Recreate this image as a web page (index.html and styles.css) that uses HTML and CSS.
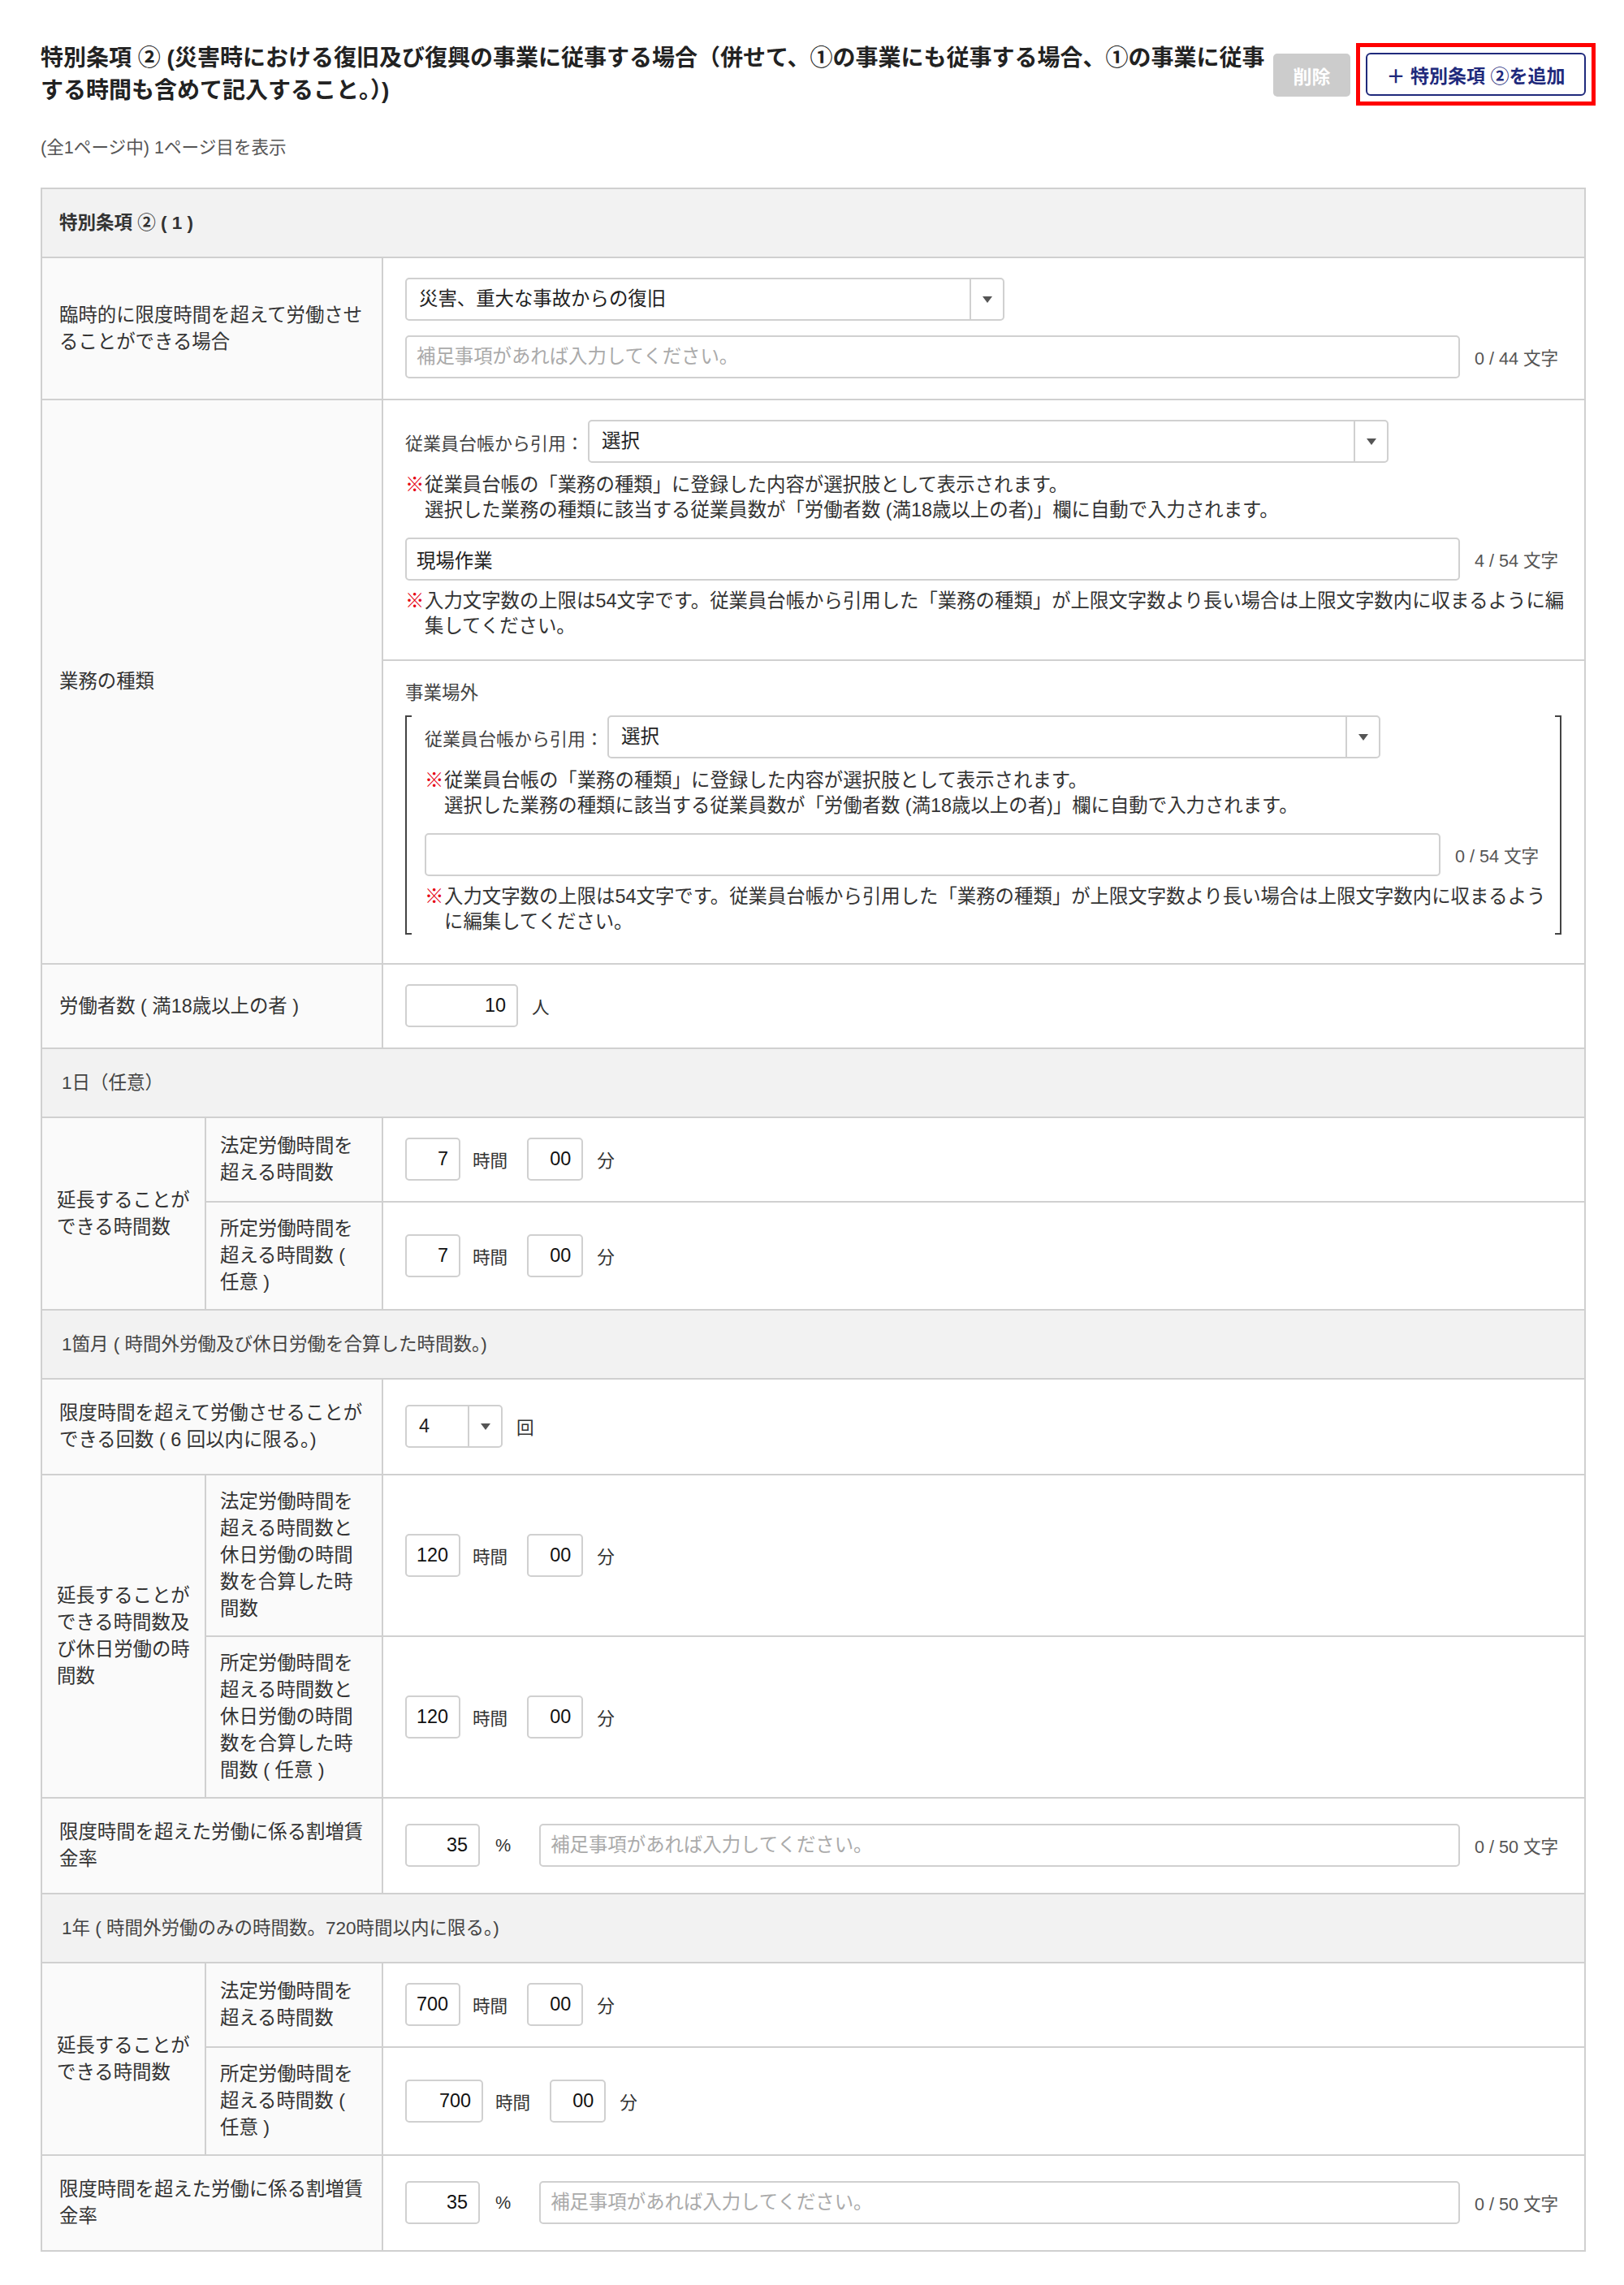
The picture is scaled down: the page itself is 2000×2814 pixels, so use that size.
FILE: index.html
```html
<!doctype html>
<html lang="ja">
  <head>
    <meta charset="UTF-8" />
    <meta name="viewport" content="width=device-width, initial-scale=1.0"/>
    <title>特別条項 ②</title>
    <link rel="stylesheet" href="styles.css">
  </head>
  <body>
    <div class="page">
      <div class="page-head">
        <h2 class="page-title">特別条項 ② (災害時における復旧及び復興の事業に従事する場合（併せて、①の事業にも従事する場合、①の事業に従事する時間も含めて記入すること。）)</h2>
        <button class="btn-delete" disabled>削除</button>
        <div class="highlight">
          <button class="btn-add">＋ 特別条項 ②を追加</button>
        </div>
      </div>

      <p class="page-info">(全1ページ中) 1ページ目を表示</p>

      <table class="form-table">
        <colgroup>
          <col class="col-group">
          <col class="col-sub">
          <col>
        </colgroup>

        <tr class="section-head first">
          <th colspan="3">特別条項 ② ( 1 )</th>
        </tr>

        <tr>
          <th class="label" colspan="2">臨時的に限度時間を超えて労働させることができる場合</th>
          <td class="value">
            <div class="select select-reason">
              <span class="select-value">災害、重大な事故からの復旧</span>
              <span class="select-arrow"></span>
            </div>
            <div class="text-row gap-top">
              <input class="field" type="text" placeholder="補足事項があれば入力してください。">
              <span class="counter">0 / 44 文字</span>
            </div>
          </td>
        </tr>

        <tr>
          <th class="label" colspan="2">業務の種類</th>
          <td class="value split">
            <div class="block">
              <div class="cite-row">
                <span class="cite-label">従業員台帳から引用：</span>
                <div class="select select-cite">
                  <span class="select-value">選択</span>
                  <span class="select-arrow"></span>
                </div>
              </div>
              <div class="note">
                <span class="note-mark">※</span>
                <span>従業員台帳の「業務の種類」に登録した内容が選択肢として表示されます。<br>選択した業務の種類に該当する従業員数が「労働者数 (満18歳以上の者)」欄に自動で入力されます。</span>
              </div>
              <div class="text-row gap-top">
                <input class="field" type="text" value="現場作業">
                <span class="counter">4 / 54 文字</span>
              </div>
              <div class="note after-field">
                <span class="note-mark">※</span>
                <span>入力文字数の上限は54文字です。従業員台帳から引用した「業務の種類」が上限文字数より長い場合は上限文字数内に収まるように編集してください。</span>
              </div>
            </div>

            <div class="block outside">
              <div class="outside-title">事業場外</div>
              <div class="bracket">
                <div class="cite-row">
                  <span class="cite-label">従業員台帳から引用：</span>
                  <div class="select select-cite-inner">
                    <span class="select-value">選択</span>
                    <span class="select-arrow"></span>
                  </div>
                </div>
                <div class="note">
                  <span class="note-mark">※</span>
                  <span>従業員台帳の「業務の種類」に登録した内容が選択肢として表示されます。<br>選択した業務の種類に該当する従業員数が「労働者数 (満18歳以上の者)」欄に自動で入力されます。</span>
                </div>
                <div class="text-row gap-top">
                  <input class="field" type="text" value="">
                  <span class="counter">0 / 54 文字</span>
                </div>
                <div class="note after-field">
                  <span class="note-mark">※</span>
                  <span>入力文字数の上限は54文字です。従業員台帳から引用した「業務の種類」が上限文字数より長い場合は上限文字数内に収まるように編集してください。</span>
                </div>
              </div>
            </div>
          </td>
        </tr>

        <tr>
          <th class="label" colspan="2">労働者数 ( 満18歳以上の者 )</th>
          <td class="value">
            <div class="inline-row">
              <input class="field num num-people" type="text" value="10">
              <span class="unit">人</span>
            </div>
          </td>
        </tr>

        <tr class="section-head">
          <th colspan="3">1日（任意）</th>
        </tr>

        <tr>
          <th class="label label-group" rowspan="2">延長することができる時間数</th>
          <th class="label label-sub">法定労働時間を超える時間数</th>
          <td class="value">
            <div class="inline-row">
              <input class="field num num-hours" type="text" value="7">
              <span class="unit">時間</span>
              <input class="field num num-minutes" type="text" value="00">
              <span class="unit">分</span>
            </div>
          </td>
        </tr>
        <tr>
          <th class="label label-sub">所定労働時間を超える時間数 ( 任意 )</th>
          <td class="value">
            <div class="inline-row">
              <input class="field num num-hours" type="text" value="7">
              <span class="unit">時間</span>
              <input class="field num num-minutes" type="text" value="00">
              <span class="unit">分</span>
            </div>
          </td>
        </tr>

        <tr class="section-head">
          <th colspan="3">1箇月 ( 時間外労働及び休日労働を合算した時間数。)</th>
        </tr>

        <tr>
          <th class="label" colspan="2">限度時間を超えて労働させることができる回数 ( 6 回以内に限る。)</th>
          <td class="value">
            <div class="inline-row">
              <div class="select select-count">
                <span class="select-value">4</span>
                <span class="select-arrow"></span>
              </div>
              <span class="unit">回</span>
            </div>
          </td>
        </tr>

        <tr>
          <th class="label label-group" rowspan="2">延長することができる時間数及び休日労働の時間数</th>
          <th class="label label-sub">法定労働時間を超える時間数と休日労働の時間数を合算した時間数</th>
          <td class="value">
            <div class="inline-row">
              <input class="field num num-hours" type="text" value="120">
              <span class="unit">時間</span>
              <input class="field num num-minutes" type="text" value="00">
              <span class="unit">分</span>
            </div>
          </td>
        </tr>
        <tr>
          <th class="label label-sub">所定労働時間を超える時間数と休日労働の時間数を合算した時間数 ( 任意 )</th>
          <td class="value">
            <div class="inline-row">
              <input class="field num num-hours" type="text" value="120">
              <span class="unit">時間</span>
              <input class="field num num-minutes" type="text" value="00">
              <span class="unit">分</span>
            </div>
          </td>
        </tr>

        <tr>
          <th class="label" colspan="2">限度時間を超えた労働に係る割増賃金率</th>
          <td class="value">
            <div class="text-row">
              <input class="field num num-rate" type="text" value="35">
              <span class="unit unit-rate">%</span>
              <input class="field" type="text" placeholder="補足事項があれば入力してください。">
              <span class="counter">0 / 50 文字</span>
            </div>
          </td>
        </tr>

        <tr class="section-head">
          <th colspan="3">1年 ( 時間外労働のみの時間数。720時間以内に限る。)</th>
        </tr>

        <tr>
          <th class="label label-group" rowspan="2">延長することができる時間数</th>
          <th class="label label-sub">法定労働時間を超える時間数</th>
          <td class="value">
            <div class="inline-row">
              <input class="field num num-hours" type="text" value="700">
              <span class="unit">時間</span>
              <input class="field num num-minutes" type="text" value="00">
              <span class="unit">分</span>
            </div>
          </td>
        </tr>
        <tr>
          <th class="label label-sub">所定労働時間を超える時間数 ( 任意 )</th>
          <td class="value">
            <div class="inline-row">
              <input class="field num num-hours-wide" type="text" value="700">
              <span class="unit">時間</span>
              <input class="field num num-minutes" type="text" value="00">
              <span class="unit">分</span>
            </div>
          </td>
        </tr>

        <tr>
          <th class="label" colspan="2">限度時間を超えた労働に係る割増賃金率</th>
          <td class="value">
            <div class="text-row">
              <input class="field num num-rate" type="text" value="35">
              <span class="unit unit-rate">%</span>
              <input class="field" type="text" placeholder="補足事項があれば入力してください。">
              <span class="counter">0 / 50 文字</span>
            </div>
          </td>
        </tr>
      </table>
    </div>
  </body>
</html>
```

FILE: styles.css
```css
body {
  margin: 0;
  font-family: "Liberation Sans", "Noto Sans CJK JP", sans-serif;
  color: #333;
  background: #fff;
}
button,
input {
  font-family: inherit;
}
.page {
  padding: 52px 47px 40px 50px;
}

/* heading */
.page-head {
  display: flex;
  align-items: flex-start;
  margin-right: -13px;
}
.page-title {
  flex: 0 0 1516px;
  margin: 0 2px 0 0;
  font-size: 28px;
  line-height: 40px;
  font-weight: bold;
  color: #222;
}
.btn-delete {
  flex: none;
  margin-top: 14px;
  width: 95px;
  height: 53px;
  border: none;
  border-radius: 5px;
  background: #ccc;
  color: #fff;
  font-size: 23px;
  font-weight: bold;
}
.highlight {
  flex: none;
  margin: 1px 0 0 7px;
  padding: 7px;
  border: 5px solid #f00;
}
.btn-add {
  display: block;
  width: 271px;
  height: 53px;
  border: 2px solid #1f2a7c;
  border-radius: 6px;
  background: #fff;
  color: #1f2a7c;
  font-size: 23px;
  font-weight: bold;
}
.page-info {
  margin: 36px 0 35px;
  font-size: 21.6px;
  line-height: 28px;
  color: #555;
}

/* table */
.form-table {
  width: 100%;
  border-collapse: collapse;
  table-layout: fixed;
}
.form-table th,
.form-table td {
  border: 2px solid #d0d0d0;
}
.col-group {
  width: 202px;
}
.col-sub {
  width: 218px;
}
.section-head th {
  background: #f2f2f2;
  text-align: left;
  font-weight: normal;
  font-size: 22.5px;
  line-height: 33px;
  padding: 25px 24px;
  color: #444;
}
.section-head.first th {
  font-weight: bold;
  padding-left: 21px;
  color: #333;
}
.label {
  background: #fafafa;
  text-align: left;
  font-weight: normal;
  font-size: 23.4px;
  line-height: 33px;
  padding: 25px 14px 25px 21px;
  vertical-align: middle;
  color: #333;
}
.label-group {
  padding: 16px 8px 16px 18px;
}
.label-sub {
  padding: 16px 20px 16px 17px;
}
.value {
  padding: 24px 28px 25px 27px;
  vertical-align: middle;
  background: #fff;
}
.value.split {
  padding: 0;
}
.block {
  padding: 24px 28px 25px 27px;
}
.block.outside {
  border-top: 2px solid #d0d0d0;
  padding-bottom: 35px;
}

/* controls */
.field {
  flex: 1;
  min-width: 0;
  height: 53px;
  box-sizing: border-box;
  border: 2px solid #d0d0d0;
  border-radius: 5px;
  padding: 0 12px;
  font-size: 23.4px;
  color: #222;
  background: #fff;
}
.field::placeholder {
  color: #aaa;
}
.num {
  flex: none;
  text-align: right;
  padding-right: 13px;
  color: #111;
}
.num-hours {
  width: 68px;
}
.num-hours-wide {
  width: 96px;
}
.num-minutes {
  width: 69px;
}
.num-people {
  width: 139px;
}
.num-rate {
  width: 92px;
}
.select {
  display: flex;
  height: 53px;
  box-sizing: border-box;
  border: 2px solid #d0d0d0;
  border-radius: 5px;
  background: #fff;
}
.select-value {
  flex: 1;
  padding-left: 15px;
  line-height: 49px;
  font-size: 23.4px;
  color: #222;
  white-space: nowrap;
}
.select-arrow {
  flex: none;
  width: 39px;
  border-left: 2px solid #d0d0d0;
  display: flex;
  align-items: center;
  justify-content: center;
}
.select-arrow::before {
  content: "";
  border-left: 6px solid transparent;
  border-right: 6px solid transparent;
  border-top: 8px solid #555;
}
.select-reason {
  width: 738px;
}
.select-cite {
  width: 986px;
}
.select-cite-inner {
  width: 952px;
}
.select-count {
  width: 120px;
}

.text-row,
.inline-row {
  display: flex;
  align-items: center;
}
.gap-top {
  margin-top: 18px;
}
.counter {
  flex: none;
  min-width: 107px;
  margin-left: 18px;
  font-size: 21.6px;
  color: #555;
  white-space: nowrap;
}
.unit {
  flex: none;
  margin: 0 24px 0 15px;
  font-size: 21.6px;
  color: #333;
}
.inline-row .unit:last-child {
  margin-right: 0;
  margin-left: 17px;
}
.unit-rate {
  margin: 0 35px 0 19px;
}

.cite-row {
  display: flex;
  align-items: center;
}
.cite-label {
  flex: none;
  margin-right: 5px;
  font-size: 22px;
  color: #444;
}
.note {
  display: flex;
  margin: 12px -12px 0 0;
  font-size: 23.4px;
  line-height: 31px;
  color: #333;
}
.note.after-field {
  margin-top: 10px;
}
.note-mark {
  flex: none;
  width: 24px;
  color: #e60012;
}
.outside-title {
  font-size: 22.5px;
  line-height: 32px;
  color: #444;
}
.bracket {
  position: relative;
  margin-top: 11px;
  padding: 0 22px;
  border-left: 2px solid #444;
  border-right: 2px solid #444;
}
.bracket::before,
.bracket::after {
  content: "";
  position: absolute;
  top: 0;
  bottom: 0;
  width: 6px;
  border-top: 2px solid #444;
  border-bottom: 2px solid #444;
}
.bracket::before {
  left: 0;
}
.bracket::after {
  right: 0;
}
```
